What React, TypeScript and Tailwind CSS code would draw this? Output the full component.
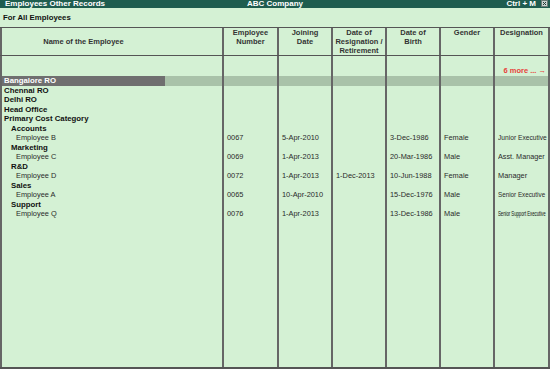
import React from "react";

const cols = "grid grid-cols-[224px_55px_54px_54px_54px_54px_55px]";
const vline = "border-r-2 border-[#666]";

type Emp = {
  name: string;
  num: string;
  join: string;
  resign: string;
  dob: string;
  gender: string;
  desig: React.ReactNode;
};

type Row =
  | { kind: "top"; label: string }
  | { kind: "group"; label: string }
  | { kind: "emp"; emp: Emp };

const rows: Row[] = [
  { kind: "top", label: "Chennai RO" },
  { kind: "top", label: "Delhi RO" },
  { kind: "top", label: "Head Office" },
  { kind: "top", label: "Primary Cost Category" },
  { kind: "group", label: "Accounts" },
  {
    kind: "emp",
    emp: {
      name: "Employee B",
      num: "0067",
      join: "5-Apr-2010",
      resign: "",
      dob: "3-Dec-1986",
      gender: "Female",
      desig: <span className="inline-block origin-left scale-x-[0.9] whitespace-nowrap">Junior Executive</span>,
    },
  },
  { kind: "group", label: "Marketing" },
  {
    kind: "emp",
    emp: {
      name: "Employee C",
      num: "0069",
      join: "1-Apr-2013",
      resign: "",
      dob: "20-Mar-1986",
      gender: "Male",
      desig: <span className="inline-block origin-left scale-x-[0.98] whitespace-nowrap">Asst. Manager</span>,
    },
  },
  { kind: "group", label: "R&D" },
  {
    kind: "emp",
    emp: {
      name: "Employee D",
      num: "0072",
      join: "1-Apr-2013",
      resign: "1-Dec-2013",
      dob: "10-Jun-1988",
      gender: "Female",
      desig: "Manager",
    },
  },
  { kind: "group", label: "Sales" },
  {
    kind: "emp",
    emp: {
      name: "Employee A",
      num: "0065",
      join: "10-Apr-2010",
      resign: "",
      dob: "15-Dec-1976",
      gender: "Male",
      desig: <span className="inline-block origin-left scale-x-[0.85] whitespace-nowrap">Senior Executive</span>,
    },
  },
  { kind: "group", label: "Support" },
  {
    kind: "emp",
    emp: {
      name: "Employee Q",
      num: "0076",
      join: "1-Apr-2013",
      resign: "",
      dob: "13-Dec-1986",
      gender: "Male",
      desig: (
        <span className="inline-block origin-left scale-x-[0.66] whitespace-nowrap text-[6.6px] tracking-[-0.1px] text-[#111]">
          Senior Support Executive
        </span>
      ),
    },
  },
];

function Cells({ children, first }: { children?: React.ReactNode[]; first?: React.ReactNode }) {
  const rest = children ?? [];
  return (
    <>
      <div className={`${vline} border-l-2 overflow-hidden whitespace-nowrap`}>{first}</div>
      {[0, 1, 2, 3, 4, 5].map((i) => (
        <div key={i} className={`${vline} overflow-hidden whitespace-nowrap pl-[3px]`}>
          {rest[i]}
        </div>
      ))}
    </>
  );
}

export default function App() {
  return (
    <div className="w-[550px] h-[369px] bg-[#d4f1d4] flex flex-col font-['Liberation_Sans',Arial,sans-serif] overflow-hidden">
      {/* Title bar */}
      <div className="h-[8px] bg-[#1f5d4f] grid grid-cols-3 items-center text-white font-bold text-[8px] leading-[8px] overflow-hidden">
        <div className="pl-[5px] -mt-[1px]">Employees Other Records</div>
        <div className="text-center -mt-[1px]">ABC Company</div>
        <div className="flex justify-end items-center gap-[5px] pr-[2px] -mt-[1px]">
          <span>Ctrl + M</span>
          <svg width="7" height="7" viewBox="0 0 7 7" className="block">
            <rect x="0.5" y="0.5" width="6" height="6" fill="#c9d3cf" stroke="#6a7a74" strokeWidth="1" />
            <path d="M2 2 L5 5 M5 2 L2 5" stroke="#1f3a33" strokeWidth="1" />
          </svg>
        </div>
      </div>

      {/* Sub header */}
      <div className="h-[19px] flex items-center pl-[3px] font-bold text-[7.8px] text-[#111]">For All Employees</div>

      {/* Table */}
      <div className="flex-1 flex flex-col border-t border-b-2 border-[#555]">
        {/* Header row */}
        <div className={`${cols} h-[28px] border-b border-[#555] text-[7.5px] leading-[9px] font-bold text-[#333]`}>
          <div className={`${vline} border-l-2 flex items-center`}>
            <div className="w-[163px] text-center">Name of the Employee</div>
          </div>
          <div className={`${vline} text-center`}>
            Employee
            <br />
            Number
          </div>
          <div className={`${vline} text-center`}>
            Joining
            <br />
            Date
          </div>
          <div className={`${vline} text-center`}>
            Date of
            <br />
            Resignation /
            <br />
            Retirement
          </div>
          <div className={`${vline} text-center`}>
            Date of
            <br />
            Birth
          </div>
          <div className={`${vline} text-center`}>Gender</div>
          <div className={`${vline} text-center`}>Designation</div>
        </div>

        {/* "6 more" row */}
        <div className={`${cols} h-[20px]`}>
          <div className={`${vline} border-l-2`} />
          <div className={vline} />
          <div className={vline} />
          <div className={vline} />
          <div className={vline} />
          <div className={vline} />
          <div className={`${vline} flex items-end justify-end pr-[2px] pb-[1px]`}>
            <span className="text-[#e8413a] font-bold text-[7.5px] leading-[9px] whitespace-nowrap">
              6 more ... →
            </span>
          </div>
        </div>

        {/* Highlighted row */}
        <div className={`${cols} h-[9.5px] text-[7.8px] leading-[9.5px]`}>
          <div className={`${vline} border-l-2 flex bg-[#a9c2a9]`}>
            <div className="w-[163px] bg-[#6f6f6f] text-white font-bold pl-[2px] whitespace-nowrap">Bangalore RO</div>
          </div>
          {[0, 1, 2, 3, 4, 5].map((i) => (
            <div key={i} className={`${vline} bg-[#a9c2a9]`} />
          ))}
        </div>

        {/* Data rows */}
        {rows.map((r, idx) => {
          if (r.kind === "top" || r.kind === "group") {
            return (
              <div key={idx} className={`${cols} h-[9.5px] text-[7.8px] leading-[9.5px] font-bold text-[#111]`}>
                <Cells first={<span className={r.kind === "top" ? "pl-[2px]" : "pl-[9px]"}>{r.label}</span>} />
              </div>
            );
          }
          const e = r.emp;
          return (
            <div key={idx} className={`${cols} h-[9.5px] text-[7.4px] leading-[9.5px] text-[#2a2a2a]`}>
              <Cells first={<span className="pl-[14px]">{e.name}</span>}>
                {[e.num, e.join, e.resign, e.dob, e.gender, e.desig]}
              </Cells>
            </div>
          );
        })}

        {/* Filler */}
        <div className={`${cols} flex-1`}>
          <Cells />
        </div>
      </div>
    </div>
  );
}
